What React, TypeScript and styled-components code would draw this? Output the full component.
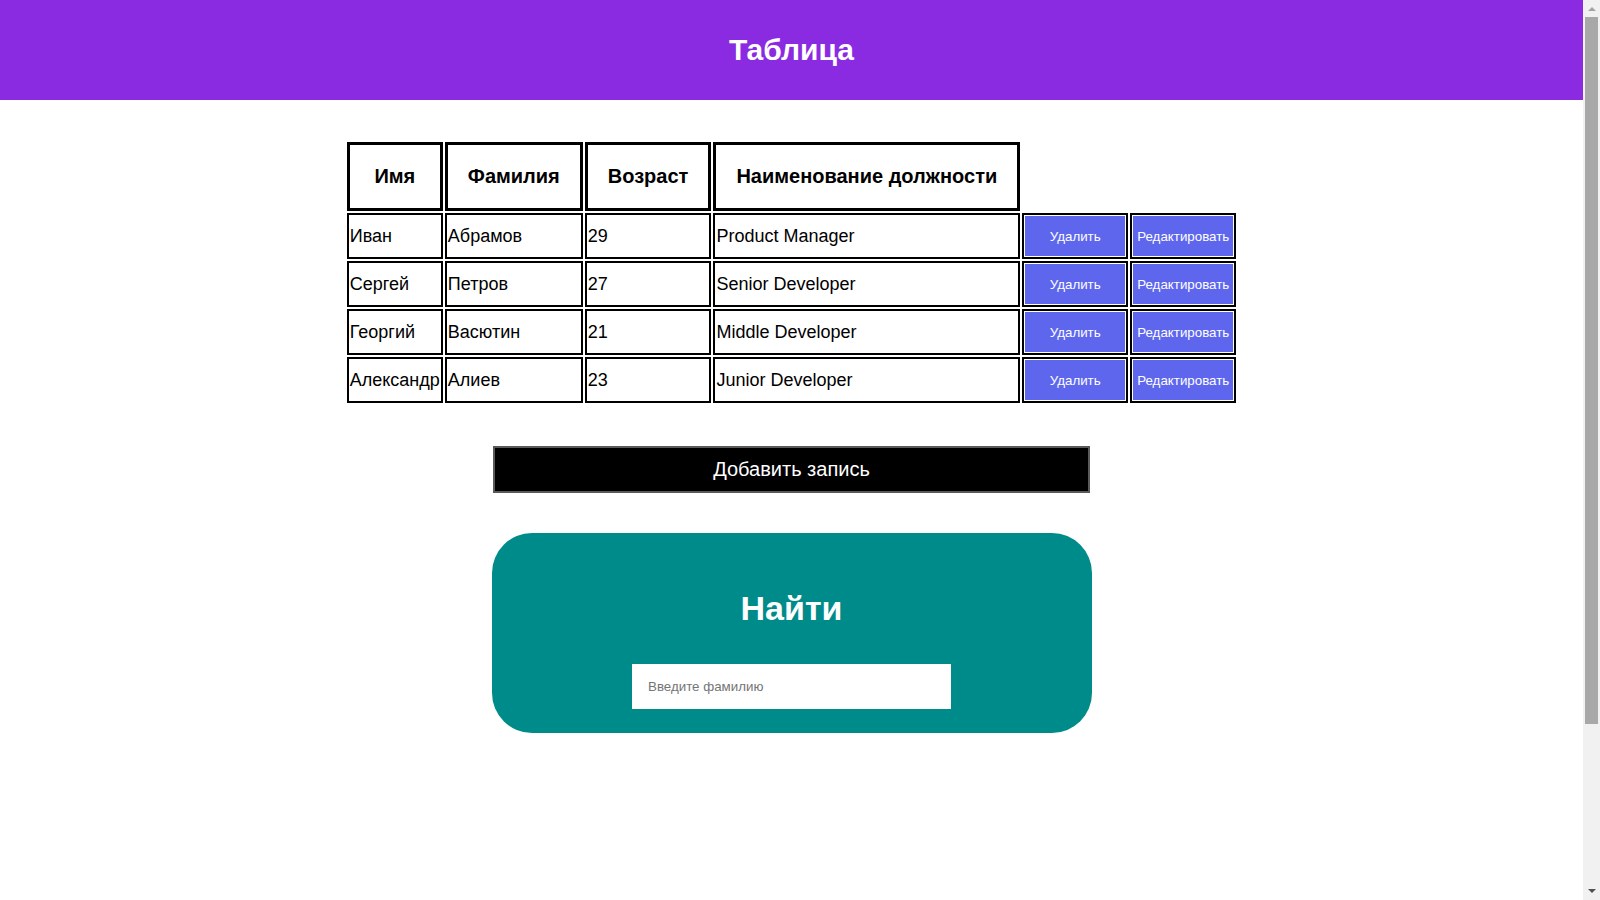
import React from "react";
import styled, { createGlobalStyle } from "styled-components";

const GlobalStyle = createGlobalStyle`
  html, body {
    margin: 0;
    padding: 0;
    height: 100%;
    overflow: hidden;
    background: #ffffff;
    font-family: "Liberation Sans", Arial, sans-serif;
    color: #000;
  }
`;

const Window = styled.div`
  display: flex;
  height: 100vh;
`;

const Page = styled.main`
  flex: 1;
  min-width: 0;
  display: flex;
  flex-direction: column;
  align-items: center;
  overflow: hidden;
`;

const ScrollRail = styled.div`
  width: 17px;
  flex: none;
  background: #f1f1f1;
  display: flex;
  flex-direction: column;
`;

const ScrollArrow = styled.div`
  height: 17px;
  flex: none;
  display: flex;
  align-items: center;
  justify-content: center;
`;

const ScrollTrack = styled.div`
  flex: 1;
  display: flex;
  flex-direction: column;
  padding: 0 2px;
`;

const ScrollThumb = styled.div`
  height: 707px;
  background: #a8a8a8;
`;

const Header = styled.header`
  align-self: stretch;
  height: 100px;
  background: #8a2be2;
  display: flex;
  align-items: center;
  justify-content: center;
`;

const Title = styled.h1`
  margin: 0;
  color: #ffffff;
  font-size: 30px;
  font-weight: 700;
`;

const Table = styled.table`
  margin-top: 40px;
  border-collapse: separate;
  border-spacing: 2px;
  font-size: 18px;
`;

const Th = styled.th`
  border: 3px solid #000;
  padding: 20px;
  font-size: 20px;
  font-weight: 700;
  text-align: center;
`;

const Td = styled.td`
  border: 2px solid #000;
  padding: 1px;
  text-align: left;
  vertical-align: middle;
  white-space: nowrap;
`;

const ActionButton = styled.button`
  display: block;
  width: 100px;
  height: 40px;
  border: none;
  background: #5e66ee;
  color: #ffffff;
  font-family: "Liberation Sans", Arial, sans-serif;
  font-size: 13.33px;
  padding: 0;
  cursor: pointer;
`;

const AddButton = styled.button`
  margin-top: 41px;
  width: 597px;
  height: 47px;
  background: #000;
  border: 2px solid #5a5a5a;
  color: #fff;
  font-family: "Liberation Sans", Arial, sans-serif;
  font-size: 20px;
  cursor: pointer;
`;

const SearchCard = styled.section`
  margin-top: 40px;
  width: 600px;
  height: 200px;
  box-sizing: border-box;
  background: #008b8b;
  border-radius: 40px;
  display: flex;
  flex-direction: column;
  align-items: center;
  padding-top: 55px;
`;

const SearchTitle = styled.h2`
  margin: 0;
  color: #fff;
  font-size: 34px;
  font-weight: 700;
  line-height: 41px;
`;

const SearchInput = styled.input`
  margin-top: 35px;
  width: 319px;
  height: 45px;
  box-sizing: border-box;
  border: none;
  padding: 0 16px;
  font-family: "Liberation Sans", Arial, sans-serif;
  font-size: 13.33px;
  outline: none;
  &::placeholder {
    color: #757575;
  }
`;

type Person = { name: string; surname: string; age: number; position: string };

const people: Person[] = [
  { name: "Иван", surname: "Абрамов", age: 29, position: "Product Manager" },
  { name: "Сергей", surname: "Петров", age: 27, position: "Senior Developer" },
  { name: "Георгий", surname: "Васютин", age: 21, position: "Middle Developer" },
  { name: "Александр", surname: "Алиев", age: 23, position: "Junior Developer" },
];

export default function App() {
  return (
    <>
      <GlobalStyle />
      <Window>
        <Page>
          <Header>
            <Title>Таблица</Title>
          </Header>
          <Table>
            <thead>
              <tr>
                <Th>Имя</Th>
                <Th>Фамилия</Th>
                <Th>Возраст</Th>
                <Th>Наименование должности</Th>
              </tr>
            </thead>
            <tbody>
              {people.map((p) => (
                <tr key={p.surname}>
                  <Td>{p.name}</Td>
                  <Td>{p.surname}</Td>
                  <Td>{p.age}</Td>
                  <Td>{p.position}</Td>
                  <Td>
                    <ActionButton>Удалить</ActionButton>
                  </Td>
                  <Td>
                    <ActionButton>Редактировать</ActionButton>
                  </Td>
                </tr>
              ))}
            </tbody>
          </Table>
          <AddButton>Добавить запись</AddButton>
          <SearchCard>
            <SearchTitle>Найти</SearchTitle>
            <SearchInput placeholder="Введите фамилию" />
          </SearchCard>
        </Page>
        <ScrollRail aria-hidden="true">
          <ScrollArrow>
            <svg width="8" height="5" viewBox="0 0 8 5">
              <path d="M0 5 L4 1 L8 5 Z" fill="#a3a3a3" />
            </svg>
          </ScrollArrow>
          <ScrollTrack>
            <ScrollThumb />
          </ScrollTrack>
          <ScrollArrow>
            <svg width="8" height="5" viewBox="0 0 8 5">
              <path d="M0 0 L8 0 L4 4 Z" fill="#505050" />
            </svg>
          </ScrollArrow>
        </ScrollRail>
      </Window>
    </>
  );
}
